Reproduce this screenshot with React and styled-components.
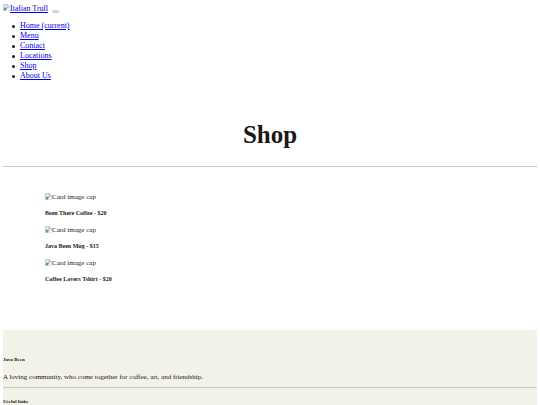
import React from 'react';
import styled, { createGlobalStyle } from 'styled-components';

const GlobalStyle = createGlobalStyle`
  body {
    margin: 3px;
    background: #fff;
    color: #1c1718;
    font-family: 'Liberation Serif', 'Times New Roman', serif;
    font-size: 7px;
    line-height: 8px;
  }
`;

const Nav = styled.nav`
  font-size: 8px;
  line-height: 10px;
`;

const NavTop = styled.div`
  display: flex;
  align-items: center;
  gap: 4px;
  padding-top: 1px;
`;

const Brand = styled.a`
  display: flex;
  color: #0000ee;
`;

const Toggler = styled.button`
  width: 7px;
  height: 3px;
  padding: 0;
  margin-top: 5px;
  border: 1px solid #c8c8c8;
  border-radius: 2px;
  background: #e4e4e4;
`;

const NavList = styled.ul`
  margin: 7px 0 0;
  padding: 0 0 0 9px;
  list-style: none;
`;

const NavItem = styled.li`
  display: flex;
  align-items: center;
  gap: 5px;

  &::before {
    content: '';
    width: 3px;
    height: 3px;
    border-radius: 50%;
    background: #1c1718;
  }
`;

const NavLink = styled.a`
  color: #0000ee;
`;

const Title = styled.h1`
  margin: 40px 0 17px;
  font-size: 25px;
  line-height: 28px;
  text-align: center;
`;

const Divider = styled.hr`
  margin: 0;
  border: 0;
  border-top: 1px solid ${props => props.color || '#c4c4c4'};
`;

const Products = styled.section`
  padding: 26px 42px 38px;
`;

const Card = styled.article`
  padding-bottom: 9px;
`;

const CardImage = styled.div`
  display: flex;
  line-height: 9px;
`;

const CardTitle = styled.h5`
  margin: 8px 0 0;
  font-size: 6px;
  line-height: 7px;
`;

const Footer = styled.footer`
  padding: 27px 0 8px;
  background: #f2f2e9;
`;

const FooterTitle = styled.h6`
  margin: 0;
  font-size: 5px;
  line-height: 6px;
`;

const FooterText = styled.p`
  margin: 10px 0 6px;
`;

const FooterLinks = styled.div`
  padding-top: 11px;
`;

const MissingIcon = styled.svg`
  flex: none;
  width: 7px;
  height: 7px;
`;

const links = ['Home (current)', 'Menu', 'Contact', 'Locations', 'Shop', 'About Us'];

const products = [
  { name: 'Been There Coffee', price: 20 },
  { name: 'Java Been Mug', price: 15 },
  { name: 'Coffee Lovers Tshirt', price: 20 }
];

const MissingImage = () => (
  <MissingIcon viewBox="0 0 16 16" aria-hidden="true">
    <path d="M1 1h9l5 5v9H1z" fill="#c3d5f5" stroke="#9a9a9a" />
    <path d="M10 1v5h5" fill="#fff" stroke="#9a9a9a" />
    <circle cx="5" cy="5" r="2" fill="#fff" />
    <path d="M2 14V11l4-3 3 3-3 3z" fill="#4caf50" />
    <path d="M6 15l9-8v8z" fill="#fff" />
  </MissingIcon>
);

const App = () => {
  return (
    <>
      <GlobalStyle />
      <Nav>
        <NavTop>
          <Brand href="#">
            <MissingImage />
            <span>Italian Trull</span>
          </Brand>
          <Toggler type="button" aria-label="Toggle navigation" />
        </NavTop>
        <NavList>
          {links.map(link => (
            <NavItem key={link}>
              <NavLink href="#">{link}</NavLink>
            </NavItem>
          ))}
        </NavList>
      </Nav>

      <main>
        <Title>Shop</Title>
        <Divider />
        <Products>
          {products.map(product => (
            <Card key={product.name}>
              <CardImage>
                <MissingImage />
                <span>Card image cap</span>
              </CardImage>
              <CardTitle>{`${product.name} - $${product.price}`}</CardTitle>
            </Card>
          ))}
        </Products>
      </main>

      <Footer>
        <FooterTitle>Java Been</FooterTitle>
        <FooterText>
          A loving community, who come together for coffee, art, and friendship.
        </FooterText>
        <Divider color="#c9c9c4" />
        <FooterLinks>
          <FooterTitle>Useful links</FooterTitle>
        </FooterLinks>
      </Footer>
    </>
  );
};

export default App;
